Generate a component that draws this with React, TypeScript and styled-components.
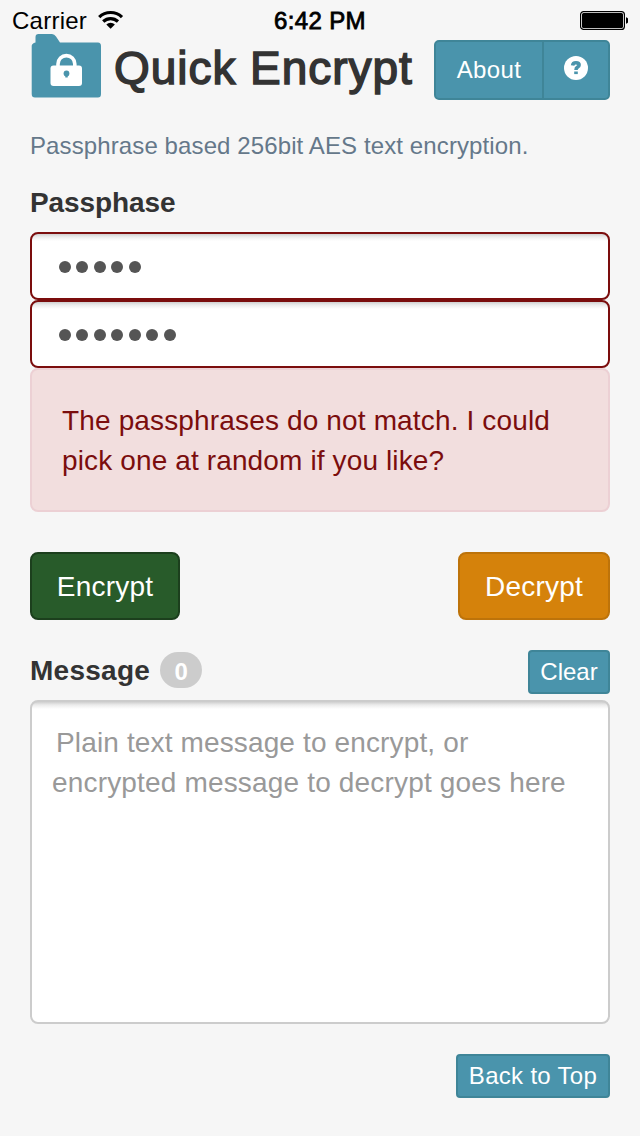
import React from "react";
import styled, { createGlobalStyle } from "styled-components";

const GlobalStyle = createGlobalStyle`
  * { box-sizing: border-box; }
  body { margin: 0; background: #f6f6f6; font-family: "Liberation Sans", Arial, sans-serif; }
  button { font-family: inherit; }
`;

const Screen = styled.div`
  width: 640px;
  height: 1136px;
  overflow: hidden;
  background: #f6f6f6;
  color: #333;
`;

const StatusBar = styled.div`
  display: grid;
  grid-template-columns: 1fr auto 1fr;
  height: 34px;
  padding: 7px 12px 0;
  font-size: 24px;
  line-height: 27px;
  color: #000;
`;

const Carrier = styled.div`
  display: flex;
  gap: 11px;
  letter-spacing: 0.25px;
`;

const Clock = styled.div`
  letter-spacing: 0.35px;
  -webkit-text-stroke: 0.8px #000;
`;

const BatterySlot = styled.div`
  display: flex;
  justify-content: flex-end;
  padding-top: 4px;
`;

const Page = styled.main`
  padding: 0 30px;
`;

const Header = styled.header`
  display: flex;
  align-items: flex-end;
  height: 66px;
`;

const FolderIcon = styled.svg`
  flex: none;
  margin: 0 13px 2px 1px;
`;

const Title = styled.h1`
  flex: 1;
  margin: 0 0 2px;
  font-size: 46px;
  line-height: 60px;
  font-weight: 400;
  white-space: nowrap;
  -webkit-text-stroke: 1.5px #333;
  letter-spacing: 0.95px;
`;

const ButtonGroup = styled.div`
  display: flex;
  width: 176px;
  height: 60px;
  border: 2px solid #3f8598;
  border-radius: 5px;
  background: #4a94ac;
`;

const GroupButton = styled.button<{ $width: number }>`
  display: flex;
  align-items: center;
  justify-content: center;
  width: ${(p) => p.$width}px;
  padding: 0;
  border: 0;
  background: none;
  color: #fff;
  font-size: 24px;
  line-height: 28px;
  letter-spacing: 0.4px;
  & + & { border-left: 2px solid #3f8598; padding-bottom: 4px; }
`;

const Tagline = styled.p`
  margin: 26px 0 0;
  font-size: 24px;
  line-height: 40px;
  color: #65788a;
  white-space: nowrap;
  letter-spacing: 0.11px;
`;

const Label = styled.h2<{ $spacing: number }>`
  margin: 0;
  font-size: 28px;
  line-height: 40px;
  font-weight: 700;
  letter-spacing: ${(p) => p.$spacing}px;
`;

const PassphraseLabel = styled(Label)`
  padding-top: 17px;
  height: 66px;
`;

const PasswordField = styled.div`
  display: flex;
  align-items: center;
  gap: 5.5px;
  height: 68px;
  padding: 1px 0 0 26.5px;
  border: 2px solid #7b0d0d;
  border-radius: 8px;
  background: linear-gradient(#d0d0d0, #ececec 3px, #fff 7px);
`;

const Dot = styled.span`
  width: 12px;
  height: 12px;
  border-radius: 50%;
  background: #555;
`;

const Alert = styled.div`
  height: 144px;
  padding: 31px 30px;
  border: 2px solid #ecd0d4;
  border-radius: 8px;
  background: #f2dede;
  color: #7b0d0d;
  font-size: 28px;
  line-height: 40px;
  white-space: nowrap;
`;

const AlertLine = styled.div<{ $spacing: number }>`
  letter-spacing: ${(p) => p.$spacing}px;
`;

const Actions = styled.div`
  display: flex;
  justify-content: space-between;
  margin-top: 40px;
`;

const ActionButton = styled.button<{ $width: number; $fill: string; $edge: string }>`
  width: ${(p) => p.$width}px;
  height: 68px;
  padding: 2px 0 0;
  border: 2px solid ${(p) => p.$edge};
  border-radius: 8px;
  background: ${(p) => p.$fill};
  color: #fff;
  font-size: 28px;
  line-height: 40px;
  letter-spacing: 0.2px;
`;

const MessageHead = styled.div`
  display: flex;
  align-items: flex-start;
  margin-top: 30px;
  height: 50px;
`;

const MessageLabel = styled(Label)`
  padding-top: 1px;
`;

const Badge = styled.span`
  width: 42px;
  height: 36px;
  margin: 2px auto 0 10px;
  border-radius: 18px;
  background: #ccc;
  color: #fff;
  font-size: 24px;
  line-height: 40px;
  font-weight: 700;
  text-align: center;
`;

const SmallButton = styled.button<{ $width: number; $spacing: number }>`
  width: ${(p) => p.$width}px;
  height: 44px;
  padding: 0;
  border: 2px solid #3f8598;
  border-radius: 4px;
  background: #4a94ac;
  color: #fff;
  font-size: 24px;
  line-height: 36px;
  letter-spacing: ${(p) => p.$spacing}px;
  white-space: nowrap;
`;

const MessageBox = styled.div`
  height: 324px;
  padding: 21px 20px;
  border: 2px solid #ccc;
  border-radius: 8px;
  background: linear-gradient(#d0d0d0, #ececec 3px, #fff 7px);
  color: #999;
  font-size: 28px;
  line-height: 40px;
  white-space: nowrap;
`;

const PlaceholderLine = styled.div<{ $indent?: number; $spacing: number }>`
  padding-left: ${(p) => p.$indent ?? 0}px;
  letter-spacing: ${(p) => p.$spacing}px;
`;

const Footer = styled.footer`
  display: flex;
  justify-content: flex-end;
  margin-top: 30px;
`;

const WifiIcon = styled.svg`
  margin-top: 3px;
`;

const Wifi = () => (
  <WifiIcon width="26" height="20" viewBox="0 0 26 20">
    <g fill="none" stroke="#000" strokeWidth="3.2">
      <path d="M1.2 7.100a16.400 16.400 0 0 1 22.800 0" />
      <path d="M5.200 11.500a10.800 10.800 0 0 1 14.800 0" />
    </g>
    <path d="M12.600 18.800l-4.300-4.200a6 6 0 0 1 8.600 0z" />
  </WifiIcon>
);

const Battery = () => (
  <svg width="48" height="20" viewBox="0 0 48 20">
    <rect x="0.6" y="0.6" width="43.8" height="17.8" rx="3" fill="#fff" stroke="#000" strokeWidth="1.2" />
    <rect x="2" y="2" width="41" height="15" rx="1.5" />
    <path d="M46 6.2c3.6 1 3.6 5.6 0 6.6z" />
  </svg>
);

const Dots = ({ count }: { count: number }) => (
  <PasswordField>
    {Array.from({ length: count }, (_, i) => (
      <Dot key={i} />
    ))}
  </PasswordField>
);

export default function App() {
  return (
    <Screen>
      <GlobalStyle />
      <StatusBar>
        <Carrier>
          Carrier
          <Wifi />
        </Carrier>
        <Clock>6:42 PM</Clock>
        <BatterySlot>
          <Battery />
        </BatterySlot>
      </StatusBar>
      <Page>
        <Header>
          <FolderIcon width="70" height="64" viewBox="0 0 70 64">
            <path fill="#4a94ac" d="M4.500 3Q4.500 0 7.500 0H21Q23.500 0 25 2.500L29 8.500H67Q70 8.500 70 12V60Q70 63.500 67 63.500H4Q0.700 63.500 0.700 60V12Q0.700 9.500 4.500 8.500z" />
            <path fill="none" stroke="#fff" strokeWidth="3.600" d="M27 33V30a8.400 8.400 0 0 1 16.800 0V33" />
            <rect x="19.500" y="31.500" width="31.500" height="20.500" rx="3" fill="#fff" />
            <circle cx="35.500" cy="39.500" r="2.900" fill="#4a94ac" />
            <path fill="#4a94ac" d="M34.300 39.500h2.400v4h-2.400z" />
          </FolderIcon>
          <Title>Quick Encrypt</Title>
          <ButtonGroup>
            <GroupButton $width={106}>About</GroupButton>
            <GroupButton $width={66}>
              <svg width="24" height="24" viewBox="0 0 24 24">
                <circle cx="12" cy="12" r="12" fill="#fff" />
                <path fill="none" stroke="#4a94ac" strokeWidth="3.600" d="M8.600 9.500Q8.900 6.700 12 6.700Q15.100 6.700 15.100 8.900Q15.100 10.300 13.500 11.200Q12 12 12 14" />
                <rect x="10.200" y="15.500" width="3.600" height="2.600" fill="#4a94ac" />
              </svg>
            </GroupButton>
          </ButtonGroup>
        </Header>
        <Tagline>Passphrase based 256bit AES text encryption.</Tagline>
        <PassphraseLabel $spacing={-0.1}>Passphase</PassphraseLabel>
        <Dots count={5} />
        <Dots count={7} />
        <Alert>
          <AlertLine $spacing={0.15}>The passphrases do not match. I could</AlertLine>
          <AlertLine $spacing={0.13}>pick one at random if you like?</AlertLine>
        </Alert>
        <Actions>
          <ActionButton $width={150} $fill="#285b2a" $edge="#1c3f1d">Encrypt</ActionButton>
          <ActionButton $width={152} $fill="#d5820b" $edge="#bd730a">Decrypt</ActionButton>
        </Actions>
        <MessageHead>
          <MessageLabel $spacing={0.27}>Message</MessageLabel>
          <Badge>0</Badge>
          <SmallButton $width={82} $spacing={0}>Clear</SmallButton>
        </MessageHead>
        <MessageBox>
          <PlaceholderLine $indent={4} $spacing={0.14}>Plain text message to encrypt, or</PlaceholderLine>
          <PlaceholderLine $spacing={0.17}>encrypted message to decrypt goes here</PlaceholderLine>
        </MessageBox>
        <Footer>
          <SmallButton $width={154} $spacing={0.3}>Back to Top</SmallButton>
        </Footer>
      </Page>
    </Screen>
  );
}
